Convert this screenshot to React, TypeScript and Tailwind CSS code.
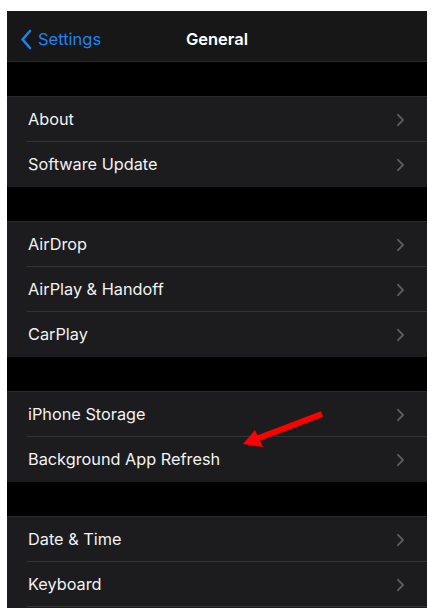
const groups = [
  ["About", "Software Update"],
  ["AirDrop", "AirPlay & Handoff", "CarPlay"],
  ["iPhone Storage", "Background App Refresh"],
  ["Date & Time", "Keyboard"],
];

function Chevron() {
  return (
    <svg width="9" height="14" viewBox="0 0 9 14" className="shrink-0">
      <path d="M2 1.8 L7 7 L2 12.2" fill="none" stroke="#5b5b5f" strokeWidth="1.9" strokeLinecap="round" strokeLinejoin="round" />
    </svg>
  );
}

function Row({ label, sep }: { label: string; sep: boolean }) {
  return (
    <div className="relative flex h-[45px] items-center pl-[21px] pr-[22px]">
      <span className="flex-1 text-[16.3px] text-[#f2f2f2]">{label}</span>
      <Chevron />
      {sep && <div className="absolute bottom-0 left-[20px] right-0 h-px bg-[#333336]" />}
    </div>
  );
}

export default function App() {
  return (
    <div className="relative h-[613px] w-[434px] overflow-hidden bg-white pl-[7px] pt-[11px]" style={{ fontFamily: "Inter, 'Noto Sans', sans-serif" }}>
      <div className="h-[597px] w-[420px] overflow-hidden bg-black">

        {/* nav bar */}
        <div className="relative flex h-[51px] items-center border-b border-[#2a2a2c] bg-[#171717] pt-[6px]">
          <div className="flex items-center pl-[13px] text-[#1e82f5]">
            <svg width="12" height="21" viewBox="0 0 12 21">
              <path d="M10 2 L2.5 10.5 L10 19" fill="none" stroke="#1e82f5" strokeWidth="2.6" strokeLinecap="round" strokeLinejoin="round" />
            </svg>
            <span className="ml-[6px] text-[16.5px]">Settings</span>
          </div>
          <span className="absolute left-0 right-0 text-center text-[16.5px] font-semibold text-white">General</span>
        </div>

        {groups.map((g, i) => (
          <div key={i} className="mt-[34px] border-t border-[#2a2a2c] bg-[#1c1c1e]">
            {g.map((label, j) => (
              <Row key={label} label={label} sep={j < g.length - 1 || i === groups.length - 1} />
            ))}
            {i === groups.length - 1 && <div className="h-[10px]" />}
          </div>
        ))}
      </div>

      {/* red annotation arrow */}
      <svg className="absolute left-0 top-0" width="434" height="613" viewBox="0 0 434 613">
        <line x1="322" y1="414" x2="256" y2="439" stroke="#ff0000" strokeWidth="6" />
        <polygon points="243,444 255,430 263,447" fill="#ff0000" />
      </svg>
    </div>
  );
}
